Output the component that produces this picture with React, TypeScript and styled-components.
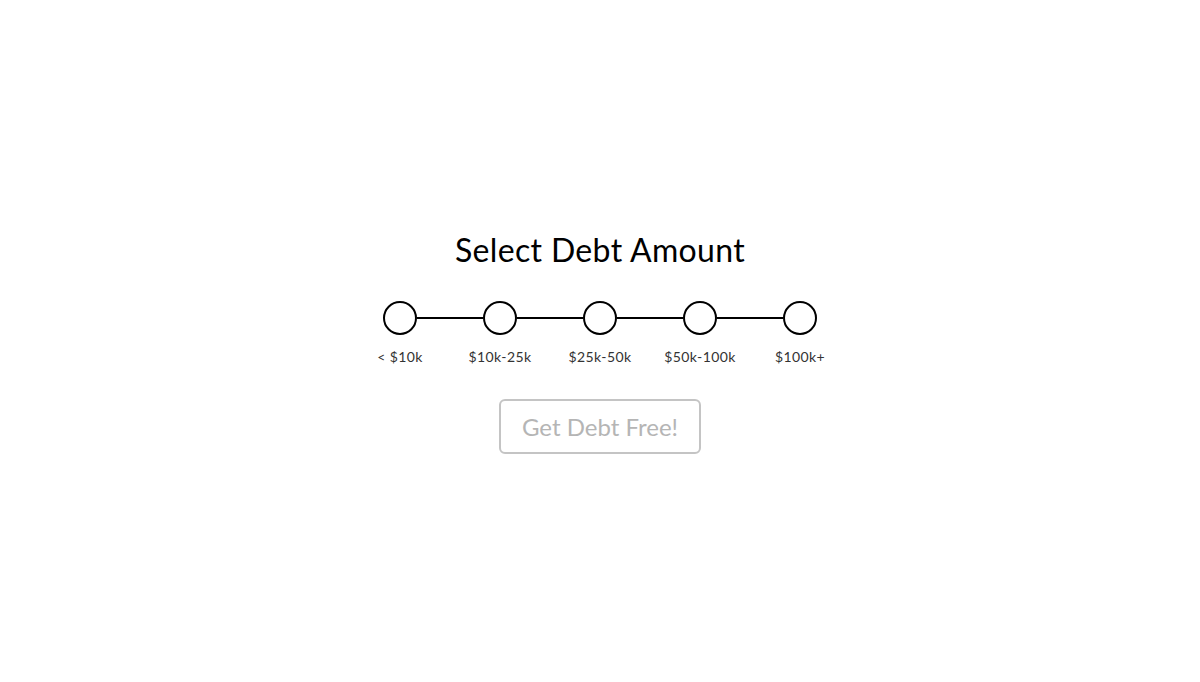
import styled, { createGlobalStyle } from "styled-components"

const GlobalStyle = createGlobalStyle`
    html, body {
        margin: 0;
        padding: 0;
        background: #fff;
        font-family: Lato, "Open Sans", sans-serif;
    }
`

const amounts = ["< $10k", "$10k-25k", "$25k-50k", "$50k-100k", "$100k+"]

export default function App() {
    return (
        <>
            <GlobalStyle />
            <Page>
                <Title>Select Debt Amount</Title>
                <Steps>
                    {amounts.map((label, i) => (
                        <Step key={label}>
                            <Track>
                                <Line $hidden={i === 0} />
                                <Dot />
                                <Line $hidden={i === amounts.length - 1} />
                            </Track>
                            <Label>{label}</Label>
                        </Step>
                    ))}
                </Steps>
                <Button>Get Debt Free!</Button>
            </Page>
        </>
    )
}

const Page = styled.main`
    min-height: 100vh;
    box-sizing: border-box;
    padding-top: 3px;
    display: flex;
    flex-direction: column;
    align-items: center;
    justify-content: center;
`

const Title = styled.h1`
    margin: 0 0 33px;
    font-size: 32px;
    font-weight: 400;
    letter-spacing: 0.35px;
    color: #000;
    line-height: 36px;
`

const Steps = styled.div`
    display: flex;
`

const Step = styled.div`
    width: 100px;
    display: flex;
    flex-direction: column;
    align-items: center;
`

const Track = styled.div`
    display: flex;
    align-items: center;
    width: 100%;
`

const Line = styled.div<{ $hidden?: boolean }>`
    flex: 1;
    height: 2px;
    background: ${p => (p.$hidden ? "transparent" : "#000")};
`

const Dot = styled.div`
    width: 30px;
    height: 30px;
    border: 2px solid #000;
    border-radius: 50%;
    background: #fff;
`

const Label = styled.span`
    margin-top: 13px;
    font-size: 14px;
    line-height: 18px;
    color: #333;
    letter-spacing: 0.4px;
    white-space: nowrap;
`

const Button = styled.button`
    margin-top: 33px;
    width: 202px;
    height: 55px;
    border: 2px solid #c4c4c4;
    border-radius: 6px;
    background: #fff;
    color: #b5b5b5;
    font-family: inherit;
    font-size: 24px;
    cursor: not-allowed;
`
